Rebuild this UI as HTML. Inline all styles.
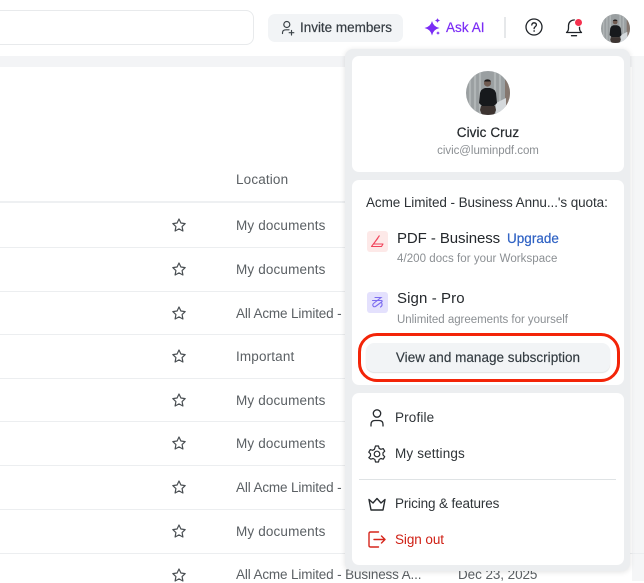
<!DOCTYPE html>
<html><head><meta charset="utf-8"><style>
html,body{margin:0;padding:0;background:#fff}
body{width:644px;height:581px;position:relative;overflow:hidden;font-family:"Liberation Sans",sans-serif;filter:blur(.3px)}
.a{position:absolute}
.t{position:absolute;white-space:nowrap;line-height:16px}
.r{font-size:13.5px;color:#5b6064;letter-spacing:.15px;left:236px}
.l{position:absolute;left:0;width:345px;height:1px;background:#eceef0}
.m{font-size:13.5px;color:#2f3438;letter-spacing:.15px;left:395px}
svg{position:absolute;overflow:visible}
</style></head><body>
<svg width="0" height="0" style="position:absolute"><defs>
<g id="star"><path d="M7 1l1.900 4 4.300.6-3.100 3 .8 4.400L7 10.900 3.100 13l.8-4.400-3.100-3L5.100 5z" fill="none" stroke="#4a4f53" stroke-width="1.200" stroke-linejoin="round"/></g>
<g id="ph"><clipPath id="c"><circle cx="22" cy="22" r="22"/></clipPath><g clip-path="url(#c)">
<rect width="44" height="44" fill="#9a9fa1"/>
<path d="M4 0v44M9 0v44M14 0v44M29 0v44M34 0v44" stroke="#b0b5b6" stroke-width="2.200"/>
<path d="M39 0h5v44h-5z" fill="#85776f"/>
<path d="M30 32l10-5v17H30z" fill="#d5d9dc"/>
<circle cx="21.500" cy="12" r="3.600" fill="#6f5a50"/><path d="M18 10.500a3.600 2.800 0 0 1 7 0z" fill="#1d1a1a"/>
<path d="M14 22q1-4 5-5h5q5 1 6 5l1 10-3 3H16l-3-3z" fill="#17191c"/>
<path d="M15 35h14l1 4-2 5H16l-2-5z" fill="#3d3431"/>
</g></g></defs></svg>

<!-- background -->
<div class="a" style="left:0;top:56px;width:644px;height:11px;background:#f3f4f6"></div>
<div class="a" style="left:632px;top:56px;width:12px;height:525px;background:#f5f6f7"></div>

<!-- search -->
<div class="a" style="left:-20px;top:10px;width:272px;height:33px;border:1.500px solid #e8eaec;border-radius:8px;background:#fff"></div>

<!-- invite -->
<div class="a" style="left:268px;top:14px;width:135px;height:28px;border-radius:7px;background:#f2f4f6"></div>
<svg style="left:281px;top:20px" width="16" height="16" viewBox="0 0 16 16" fill="none" stroke="#3d4449" stroke-width="1.200" stroke-linecap="round"><circle cx="5.800" cy="4.500" r="3"/><path d="M1.500 13.500v-.8Q1.500 9.800 5 9.800h3M10.500 10.500v4.500M8.200 12.700h4.600"/></svg>
<div class="t" style="left:300px;top:19.500px;font-size:13.500px;font-weight:500;color:#363d43;letter-spacing:-.02px;-webkit-text-stroke:.2px #363d43">Invite members</div>

<!-- ask ai -->
<svg style="left:424px;top:18px" width="18" height="18" viewBox="0 0 18 18" fill="#7b2cf5"><path d="M8 3Q9.300 8.700 15.500 10 9.300 11.300 8 17.500 6.700 11.300.5 10 6.700 8.700 8 3z"/><path d="M13.500 0q.4 2 2.700 2.500Q13.900 3 13.500 5q-.4-2-2.700-2.500Q13.100 2 13.500 0zM14 13q.3 1.500 2 2-1.700.5-2 2-.3-1.500-2-2 1.700-.5 2-2z"/></svg>
<div class="t" style="left:446px;top:19.500px;font-size:13.500px;font-weight:500;color:#7b2cf5;letter-spacing:.05px;-webkit-text-stroke:.2px #7b2cf5">Ask AI</div>
<div class="a" style="left:504px;top:17px;width:1.500px;height:21px;background:#e6e8ea"></div>

<!-- help -->
<svg style="left:525px;top:18px" width="18" height="18" viewBox="0 0 18 18" fill="none" stroke="#1f2328" stroke-width="1.300"><circle cx="9" cy="9" r="8"/><path d="M6.800 7Q7 4.800 9.200 4.800q2.200.1 2.200 2.100c0 1.700-2.300 1.800-2.300 3.700" stroke-linecap="round"/><circle cx="9.100" cy="13" r=".6" fill="#1f2328" stroke-width=".5"/></svg>
<!-- bell -->
<svg style="left:565px;top:18px" width="18" height="19" viewBox="0 0 18 19" fill="none" stroke="#1f2328" stroke-width="1.300" stroke-linejoin="round"><path d="M1.500 14.500q2-1.500 2-4.500V7.500a5.500 5.500 0 0 1 11 0V10q0 3 2 4.500z"/><path d="M6.500 17.700h5" stroke-linecap="round"/></svg>
<div class="a" style="left:574px;top:18px;width:7px;height:7px;border-radius:50%;background:#f5304e;border:1px solid #fff"></div>
<!-- avatar small -->
<svg style="left:601px;top:14px" width="29" height="29" viewBox="0 0 44 44"><use href="#ph"/></svg>

<!-- table -->
<div class="t r" style="top:172px">Location</div>
<div class="l" style="top:201px;height:2px;background:#eef0f2"></div>
<div class="l" style="top:247px"></div><div class="l" style="top:291px"></div><div class="l" style="top:334px"></div><div class="l" style="top:378px"></div><div class="l" style="top:421px"></div><div class="l" style="top:465px"></div><div class="l" style="top:509px"></div><div class="l" style="top:553px;width:644px"></div>
<div class="t r" style="top:218px">My documents</div>
<div class="t r" style="top:262px">My documents</div>
<div class="t r" style="top:306px;letter-spacing:-.14px">All Acme Limited - Business A...</div>
<div class="t r" style="top:349px">Important</div>
<div class="t r" style="top:393px">My documents</div>
<div class="t r" style="top:436px">My documents</div>
<div class="t r" style="top:480px;letter-spacing:-.14px">All Acme Limited - Business A...</div>
<div class="t r" style="top:524px">My documents</div>
<div class="t r" style="top:567px;letter-spacing:-.14px">All Acme Limited - Business A...</div>
<div class="t r" style="top:567px;left:458px;letter-spacing:-.08px">Dec 23, 2025</div>
<svg style="left:172px;top:218px" width="14" height="14"><use href="#star"/></svg>
<svg style="left:172px;top:262px" width="14" height="14"><use href="#star"/></svg>
<svg style="left:172px;top:306px" width="14" height="14"><use href="#star"/></svg>
<svg style="left:172px;top:349px" width="14" height="14"><use href="#star"/></svg>
<svg style="left:172px;top:393px" width="14" height="14"><use href="#star"/></svg>
<svg style="left:172px;top:436px" width="14" height="14"><use href="#star"/></svg>
<svg style="left:172px;top:480px" width="14" height="14"><use href="#star"/></svg>
<svg style="left:172px;top:524px" width="14" height="14"><use href="#star"/></svg>
<svg style="left:172px;top:568px" width="14" height="14"><use href="#star"/></svg>

<!-- panel -->
<div class="a" style="left:345px;top:49px;width:285px;height:522px;background:#eceef0;border-radius:8px;box-shadow:0 1px 6px rgba(0,0,0,.12)"></div>
<div class="a" style="left:352px;top:56px;width:272px;height:116px;background:#fff;border-radius:7px"></div>
<div class="a" style="left:352px;top:180px;width:272px;height:205px;background:#fff;border-radius:7px"></div>
<div class="a" style="left:352px;top:393px;width:272px;height:172px;background:#fff;border-radius:7px"></div>

<svg style="left:466px;top:71px" width="44" height="44" viewBox="0 0 44 44"><use href="#ph"/></svg>
<div class="t" style="left:352px;width:272px;text-align:center;top:124.500px;font-size:13.500px;font-weight:500;color:#24282c;letter-spacing:.1px;-webkit-text-stroke:.2px #24282c">Civic Cruz</div>
<div class="t" style="left:352px;width:272px;text-align:center;top:142.500px;font-size:11.500px;color:#8b8f93;letter-spacing:-.04px">civic@luminpdf.com</div>

<div class="t" style="left:366px;top:195px;font-size:13.500px;color:#2d3236;letter-spacing:-.08px">Acme Limited - Business Annu...'s quota:</div>

<div class="a" style="left:367px;top:231px;width:21px;height:21px;border-radius:3px;background:#fde9e8"></div>
<svg style="left:369px;top:233px" width="17" height="17" viewBox="0 0 17 17" fill="none" stroke="#f1445b" stroke-width="1.100" stroke-linejoin="round"><path d="M10.500 2.500L4.500 11h9.500l-1.500 2.500H2.500L9 5"/></svg>
<div class="t" style="left:397px;top:231px;font-size:15px;color:#24282c;letter-spacing:-.08px">PDF - Business</div>
<div class="t" style="left:507px;top:231px;font-size:13.500px;color:#2f62c4;letter-spacing:.02px;-webkit-text-stroke:.2px #2f62c4">Upgrade</div>
<div class="t" style="left:397px;top:251px;font-size:11.500px;color:#8b8f93;letter-spacing:.05px">4/200 docs for your Workspace</div>

<div class="a" style="left:367px;top:292px;width:21px;height:21px;border-radius:3px;background:#e4e1fd"></div>
<svg style="left:369px;top:294px" width="17" height="17" viewBox="0 0 17 17" fill="none" stroke="#7c6cf0" stroke-width="1.100" stroke-linecap="round"><path d="M6 3.500h6L4.500 9.500q-1.500 1.500 0 3 .8.500 2 0L12.500 8q1.500-1 0-1.500H3.500M12.500 8.500q1.500 3-1 4.500"/></svg>
<div class="t" style="left:397px;top:291px;font-size:15px;color:#24282c;letter-spacing:.1px">Sign - Pro</div>
<div class="t" style="left:397px;top:312px;font-size:11.500px;color:#8b8f93;letter-spacing:-.03px">Unlimited agreements for yourself</div>

<div class="a" style="left:366px;top:343px;width:244px;height:29px;border-radius:8px;background:#f2f4f6;box-shadow:0 1px 1px rgba(0,0,0,.12)"></div>
<div class="t" style="left:366px;width:244px;text-align:center;top:349.500px;font-size:13.500px;color:#333b41;letter-spacing:.02px;-webkit-text-stroke:.15px #333b41">View and manage subscription</div>
<div class="a" style="left:358px;top:333px;width:256px;height:43px;border:3px solid #f32408;border-radius:19px"></div>

<svg style="left:369px;top:409px" width="16" height="18" viewBox="0 0 16 18" fill="none" stroke="#272b2f" stroke-width="1.300" stroke-linecap="round"><circle cx="8" cy="4.500" r="3.700"/><path d="M2 17v-1.500Q2 11.500 6 11.500h4q4 0 4 4V17"/></svg>
<div class="t m" style="top:410px">Profile</div>
<svg style="left:368px;top:445px" width="18" height="18" viewBox="0 0 18 18" fill="none" stroke="#272b2f" stroke-width="1.200" stroke-linejoin="round"><circle cx="9" cy="9" r="2.800"/><path d="M7.500 1h3l.6 2.300 1.800 1 2.300-.7 1.500 2.600-1.700 1.600v2.200l1.700 1.700-1.500 2.500-2.300-.7-1.800 1-.6 2.500h-3l-.6-2.500-1.800-1-2.300.7L.8 12.700l1.700-1.700V8.800L.8 7.200l1.500-2.600 2.300.7 1.800-1z"/></svg>
<div class="t m" style="top:446px">My settings</div>
<div class="a" style="left:359px;top:479px;width:257px;height:1px;background:#dfe3e5"></div>
<svg style="left:368px;top:498px" width="18" height="13" viewBox="0 0 18 13" fill="none" stroke="#272b2f" stroke-width="1.400" stroke-linejoin="round"><path d="M1 1.500L5 5 9 .5 13 5l4-3.500L15 12H3z"/></svg>
<div class="t m" style="top:496px;letter-spacing:-.13px">Pricing &amp; features</div>
<svg style="left:368px;top:531px" width="18" height="17" viewBox="0 0 18 17" fill="none" stroke="#d6261c" stroke-width="1.400" stroke-linecap="round" stroke-linejoin="round"><path d="M10.500 1H2.500Q1 1 1 2.500v12Q1 16 2.500 16h8M6 8.500h11M13.500 5l3.500 3.500-3.500 3.500"/></svg>
<div class="t m" style="top:532px;color:#cf1f14;letter-spacing:-.07px">Sign out</div>
</body></html>
